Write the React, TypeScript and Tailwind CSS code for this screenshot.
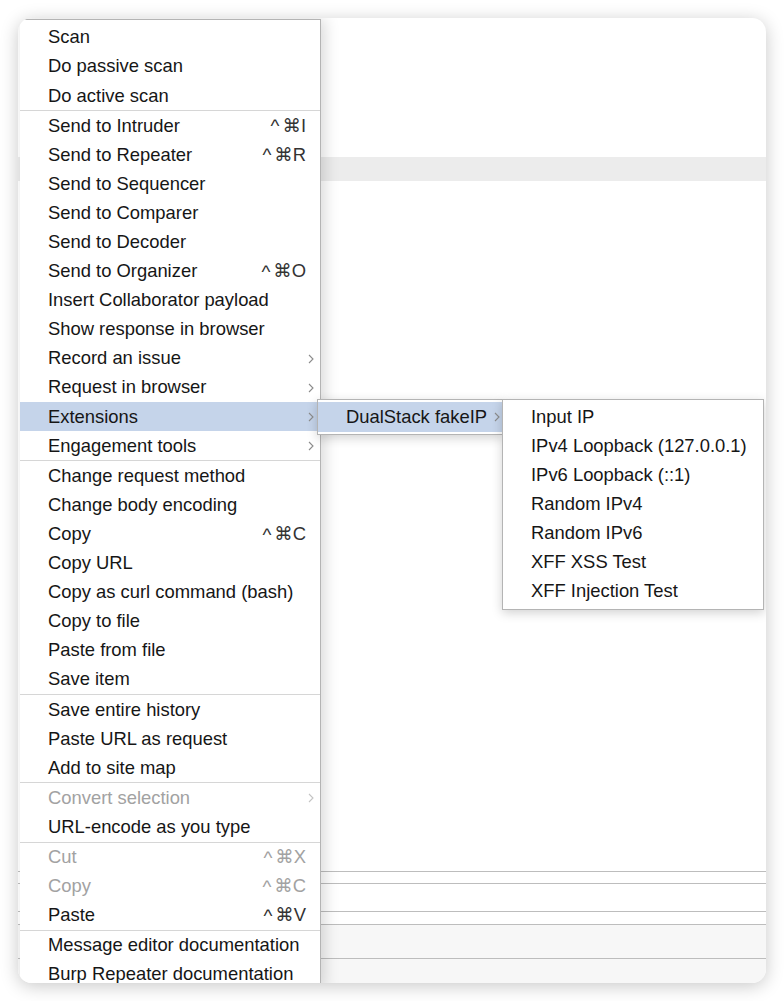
type Item = {
  label: string
  keys?: string
  sub?: boolean
  disabled?: boolean
  active?: boolean
}

const groups: Item[][] = [
  [{ label: 'Scan' }, { label: 'Do passive scan' }, { label: 'Do active scan' }],
  [
    { label: 'Send to Intruder', keys: 'I' },
    { label: 'Send to Repeater', keys: 'R' },
    { label: 'Send to Sequencer' },
    { label: 'Send to Comparer' },
    { label: 'Send to Decoder' },
    { label: 'Send to Organizer', keys: 'O' },
    { label: 'Insert Collaborator payload' },
    { label: 'Show response in browser' },
    { label: 'Record an issue', sub: true },
    { label: 'Request in browser', sub: true },
    { label: 'Extensions', sub: true, active: true },
    { label: 'Engagement tools', sub: true },
  ],
  [
    { label: 'Change request method' },
    { label: 'Change body encoding' },
    { label: 'Copy', keys: 'C' },
    { label: 'Copy URL' },
    { label: 'Copy as curl command (bash)' },
    { label: 'Copy to file' },
    { label: 'Paste from file' },
    { label: 'Save item' },
  ],
  [{ label: 'Save entire history' }, { label: 'Paste URL as request' }, { label: 'Add to site map' }],
  [{ label: 'Convert selection', sub: true, disabled: true }, { label: 'URL-encode as you type' }],
  [
    { label: 'Cut', keys: 'X', disabled: true },
    { label: 'Copy', keys: 'C', disabled: true },
    { label: 'Paste', keys: 'V' },
  ],
  [{ label: 'Message editor documentation' }, { label: 'Burp Repeater documentation' }],
]

const fakeIp = [
  'Input IP',
  'IPv4 Loopback (127.0.0.1)',
  'IPv6 Loopback (::1)',
  'Random IPv4',
  'Random IPv6',
  'XFF XSS Test',
  'XFF Injection Test',
]

function Chevron({ light }: { light?: boolean }) {
  return (
    <svg width="6" height="10" viewBox="0 0 6 10" className="shrink-0">
      <polyline
        points="1,1 5,5 1,9"
        fill="none"
        stroke={light ? '#c4c4c4' : '#8c8c8c'}
        strokeWidth="1.1"
      />
    </svg>
  )
}

function Row({ item }: { item: Item }) {
  const txt = item.disabled ? 'text-[#a2a2a2]' : 'text-[#161616]'
  return (
    <div
      className={`flex h-[29.1px] items-center pl-[28px] ${item.sub ? 'pr-[6px]' : 'pr-[14px]'} ${
        item.active ? 'bg-[#c5d4ea]' : ''
      }`}
    >
      <span className={`flex-1 whitespace-nowrap ${txt}`}>{item.label}</span>
      {item.keys && (
        <span
          className={`flex items-center gap-[3px] whitespace-nowrap ${
            item.disabled ? 'text-[#a2a2a2]' : 'text-[#333]'
          }`}
        >
          <span className="text-[19px]">^</span>
          <span>⌘{item.keys}</span>
        </span>
      )}
      {item.sub && <Chevron light={item.disabled} />}
    </div>
  )
}

export default function App() {
  return (
    <div
      className="h-[1001px] w-[784px] bg-white pl-[18px] pt-[18px] text-[18.4px] leading-none"
      style={{ fontFamily: '"Liberation Sans", "DejaVu Sans", Arial, sans-serif' }}
    >
      <div className="relative flex h-[965px] w-[748px] flex-col overflow-hidden rounded-[14px] bg-white shadow-[0_3px_18px_rgba(0,0,0,0.22)]">
        {/* window content behind the menu */}
        <div className="h-[139px]" />
        <div className="h-[24px] bg-[#ececec]" />
        <div className="flex-1" />
        <div className="h-[12px] border-t border-[#bdbdbd]" />
        <div className="h-[28px] border-t border-[#bdbdbd]" />
        <div className="h-[13px] border-t border-[#bdbdbd]" />
        <div className="h-[34px] border-t border-[#bdbdbd] bg-[#f7f7f7]" />
        <div className="h-[25px] border-t border-[#bdbdbd] bg-[#f7f7f7]" />

        {/* context menu */}
        <div className="absolute left-[2px] top-[1px] w-[301px] border-r border-t border-[#b4b4b4] bg-white pt-[3px] shadow-[4px_0_14px_rgba(0,0,0,0.15)]">
          {groups.map((g, gi) => (
            <div key={gi} className={gi > 0 ? 'border-t border-[#d6d6d6]' : ''}>
              {g.map((item, i) => (
                <Row key={i} item={item} />
              ))}
            </div>
          ))}
        </div>

        {/* extensions submenu */}
        <div className="absolute left-[299px] top-[381px] w-[186px] border border-[#b4b4b4] bg-white py-[2px] shadow-[0_3px_10px_rgba(0,0,0,0.18)]">
          <div className="flex h-[30px] items-center bg-[#c5d4ea] pl-[28px] pr-[2px]">
            <span className="flex-1 whitespace-nowrap text-[#161616]">DualStack fakeIP</span>
            <Chevron />
          </div>
        </div>

        {/* DualStack fakeIP submenu */}
        <div className="absolute left-[484px] top-[381px] w-[262px] border border-[#b4b4b4] bg-white py-[3px] shadow-[0_3px_10px_rgba(0,0,0,0.18)]">
          {fakeIp.map((t) => (
            <div key={t} className="flex h-[29px] items-center whitespace-nowrap pl-[28px] text-[#161616]">
              {t}
            </div>
          ))}
        </div>
      </div>
    </div>
  )
}
